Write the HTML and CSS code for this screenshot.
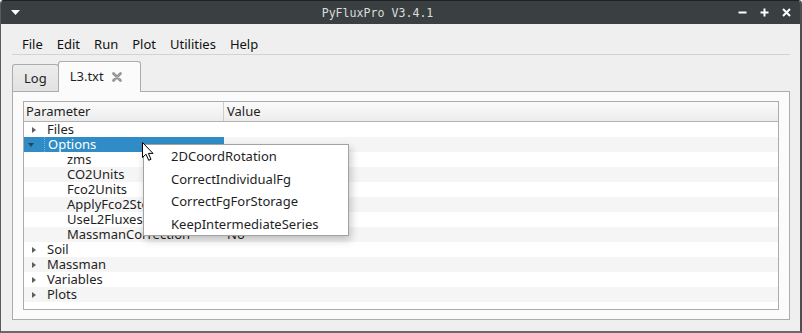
FILE: index.html
```html
<!DOCTYPE html>
<html lang="en">
<head>
    <meta charset="UTF-8">
    <title>PyFluxPro V3.4.1</title>
    <link rel="stylesheet" href="styles.css">
</head>
<body>
    <div class="window">
        <div class="titlebar">
            <div class="tb-left">
                <svg class="tb-menu" width="9" height="5" viewBox="0 0 9 5"><path d="M0 0 L9 0 L4.5 5 Z" fill="#fff"/></svg>
            </div>
            <div class="tb-title">PyFluxPro V3.4.1</div>
            <div class="tb-right">
                <svg width="9" height="9" viewBox="0 0 9 9"><path d="M0.5 4.5 H8.5" stroke="#fff" stroke-width="2"/></svg>
                <svg width="9" height="9" viewBox="0 0 9 9"><path d="M0.5 4.5 H8.5 M4.5 0.5 V8.5" stroke="#fff" stroke-width="2"/></svg>
                <svg width="9" height="9" viewBox="0 0 9 9"><path d="M1 1 L8 8 M8 1 L1 8" stroke="#fff" stroke-width="2"/></svg>
            </div>
        </div>

        <nav class="menubar">
            <span class="menu-item">File</span>
            <span class="menu-item">Edit</span>
            <span class="menu-item">Run</span>
            <span class="menu-item">Plot</span>
            <span class="menu-item">Utilities</span>
            <span class="menu-item">Help</span>
        </nav>

        <div class="tabs">
            <div class="tab">Log</div>
            <div class="tab active">
                L3.txt
                <svg class="tab-close" width="10" height="10" viewBox="0 0 10 10">
                    <path d="M1.5 1.5 L8.5 8.5 M8.5 1.5 L1.5 8.5" stroke="#8c8c8c" stroke-width="2.6" stroke-linecap="round"/>
                    <path d="M1.5 1.5 L8.5 8.5 M8.5 1.5 L1.5 8.5" stroke="#b4b4b4" stroke-width="0.8" stroke-linecap="round"/>
                </svg>
            </div>
        </div>

        <div class="tabpane">
            <div class="tree">
                <div class="tree-head">
                    <span class="col-param">Parameter</span>
                    <span class="col-value">Value</span>
                </div>
                <div class="tree-row">
                    <span class="cell"><i class="arrow"></i>Files</span><span class="cell value"></span>
                </div>
                <div class="tree-row selected">
                    <span class="cell"><i class="arrow open"></i><span class="focus">Options</span></span><span class="cell value"></span>
                </div>
                <div class="tree-row">
                    <span class="cell child">zms</span><span class="cell value"></span>
                </div>
                <div class="tree-row">
                    <span class="cell child">CO2Units</span><span class="cell value"></span>
                </div>
                <div class="tree-row">
                    <span class="cell child">Fco2Units</span><span class="cell value"></span>
                </div>
                <div class="tree-row">
                    <span class="cell child">ApplyFco2Storage</span><span class="cell value"></span>
                </div>
                <div class="tree-row">
                    <span class="cell child">UseL2Fluxes</span><span class="cell value"></span>
                </div>
                <div class="tree-row">
                    <span class="cell child">MassmanCorrection</span><span class="cell value">No</span>
                </div>
                <div class="tree-row">
                    <span class="cell"><i class="arrow"></i>Soil</span><span class="cell value"></span>
                </div>
                <div class="tree-row">
                    <span class="cell"><i class="arrow"></i>Massman</span><span class="cell value"></span>
                </div>
                <div class="tree-row">
                    <span class="cell"><i class="arrow"></i>Variables</span><span class="cell value"></span>
                </div>
                <div class="tree-row">
                    <span class="cell"><i class="arrow"></i>Plots</span><span class="cell value"></span>
                </div>
            </div>
        </div>

        <!-- menu contextual abierto sobre "Options" -->
        <div class="popup">
            <div class="popup-item">2DCoordRotation</div>
            <div class="popup-item">CorrectIndividualFg</div>
            <div class="popup-item">CorrectFgForStorage</div>
            <div class="popup-item">KeepIntermediateSeries</div>
        </div>

        <svg class="cursor" width="13" height="20" viewBox="0 0 13 20">
            <path d="M0.5 0.5 L0.5 15.5 L4 12.2 L6.7 18.3 L9 17.3 L6.4 11.4 L11 11.4 Z" fill="#fff" stroke="#000" stroke-width="1" stroke-linejoin="round"/>
        </svg>
    </div>
</body>
</html>
```

FILE: styles.css
```css
body {
    margin: 0;
    background-color: #efefef;
    font-family: "Noto Sans", "DejaVu Sans", sans-serif;
    font-size: 13px;
    color: #1f1f1f;
}

.window {
    position: relative;
    width: 802px;
    height: 333px;
    box-sizing: border-box;
    display: flex;
    flex-direction: column;
    background-color: #efefef;
    border-left: 1px solid #5a5a5a;
    border-right: 2px solid #4e4e4e;
    border-bottom: 2px solid #6a6a6a;
    border-radius: 4px 4px 0 0;
    overflow: hidden;
}

/* Barra de título */
.titlebar {
    height: 24px;
    box-sizing: border-box;
    border-top: 1px solid #1f2223;
    background-color: #3a3f41;
    display: grid;
    grid-template-columns: 24px 1fr 70px;
    align-items: center;
}

.tb-left {
    padding-left: 10px;
    display: flex;
}

.tb-title {
    text-align: center;
    font-family: "DejaVu Sans Mono", monospace;
    font-size: 11.6px;
    color: #dcdcdc;
}

.tb-right {
    display: flex;
    justify-content: flex-end;
    gap: 13px;
    padding-right: 9px;
}

.tb-right svg {
    display: block;
}

/* Menú */
.menubar {
    display: flex;
    margin: 0 10px 0 11px;
    padding: 13px 0 3px 3px;
    border-bottom: 1px solid #d3d3d3;
    line-height: 14px;
    color: #111;
}

.menu-item {
    padding: 0 7px;
}

/* Pestañas */
.tabs {
    display: flex;
    align-items: flex-end;
    height: 30px;
    margin: 6px 10px 0 11px;
}

.tab {
    position: relative;
    box-sizing: border-box;
    height: 27px;
    padding: 5px 11px 0 11px;
    line-height: 17px;
    background: linear-gradient(#ececec, #e2e2e2);
    border: 1px solid #acacac;
    border-bottom: none;
    border-radius: 3px 3px 0 0;
    color: #1f1f1f;
}

.tab.active {
    height: 31px;
    margin-bottom: -1px;
    margin-left: -1px;
    width: 83px;
    padding-top: 6px;
    background: #fbfbfb;
    z-index: 2;
    display: flex;
    align-items: flex-start;
}

.tab-close {
    margin: 4px 0 0 8px;
}

.tabpane {
    flex: 1;
    margin: 0 10px 11px 11px;
    padding: 9px 10px;
    background-color: #fbfbfb;
    border: 1px solid #acacac;
    display: flex;
}

/* Árbol de parámetros */
.tree {
    flex: 1;
    background-color: #fff;
    border: 1px solid #acacac;
}

.tree-head {
    display: grid;
    grid-template-columns: 200px 1fr;
    height: 19px;
    line-height: 19px;
    background: linear-gradient(#fbfbfb, #ececec);
    border-bottom: 1px solid #b2b2b2;
}

.col-param {
    padding-left: 2px;
    border-right: 1px solid #cdcdcd;
}

.col-value {
    padding-left: 3px;
}

.tree-row {
    display: grid;
    grid-template-columns: 200px 1fr;
    height: 15px;
    line-height: 15px;
}

.tree-row:nth-child(odd) {
    background-color: #f5f5f5;
}

.cell {
    display: flex;
    align-items: center;
    padding-left: 23px;
    white-space: nowrap;
}

.cell.child {
    padding-left: 43px;
}

.cell.value {
    padding-left: 3px;
}

.arrow {
    width: 0;
    height: 0;
    margin: 0 11px 0 -15px;
    border-top: 3.5px solid transparent;
    border-bottom: 3.5px solid transparent;
    border-left: 4px solid #5e5e5e;
}

.arrow.open {
    margin: 1px 10px 0 -16px;
    border-left: 3px solid transparent;
    border-right: 3px solid transparent;
    border-top: 4px solid #2a4457;
    border-bottom: none;
}

.tree-row.selected .cell:first-child {
    background-color: #308cc6;
    color: #fff;
    padding-left: 20px;
}

.focus {
    flex: 1;
    align-self: stretch;
    padding-left: 3px;
    border-left: 1px dotted rgba(255, 255, 255, 0.35);
}

/* Menú emergente */
.popup {
    position: absolute;
    left: 142px;
    top: 144px;
    width: 206px;
    box-sizing: border-box;
    background-color: #fff;
    border: 1px solid #a2a2a2;
    box-shadow: 2px 4px 8px rgba(0, 0, 0, 0.22);
    z-index: 5;
}

.popup-item {
    height: 22.5px;
    line-height: 22.5px;
    padding-left: 27px;
    color: #1f1f1f;
}

.cursor {
    position: absolute;
    left: 141px;
    top: 142px;
    z-index: 6;
}
```
